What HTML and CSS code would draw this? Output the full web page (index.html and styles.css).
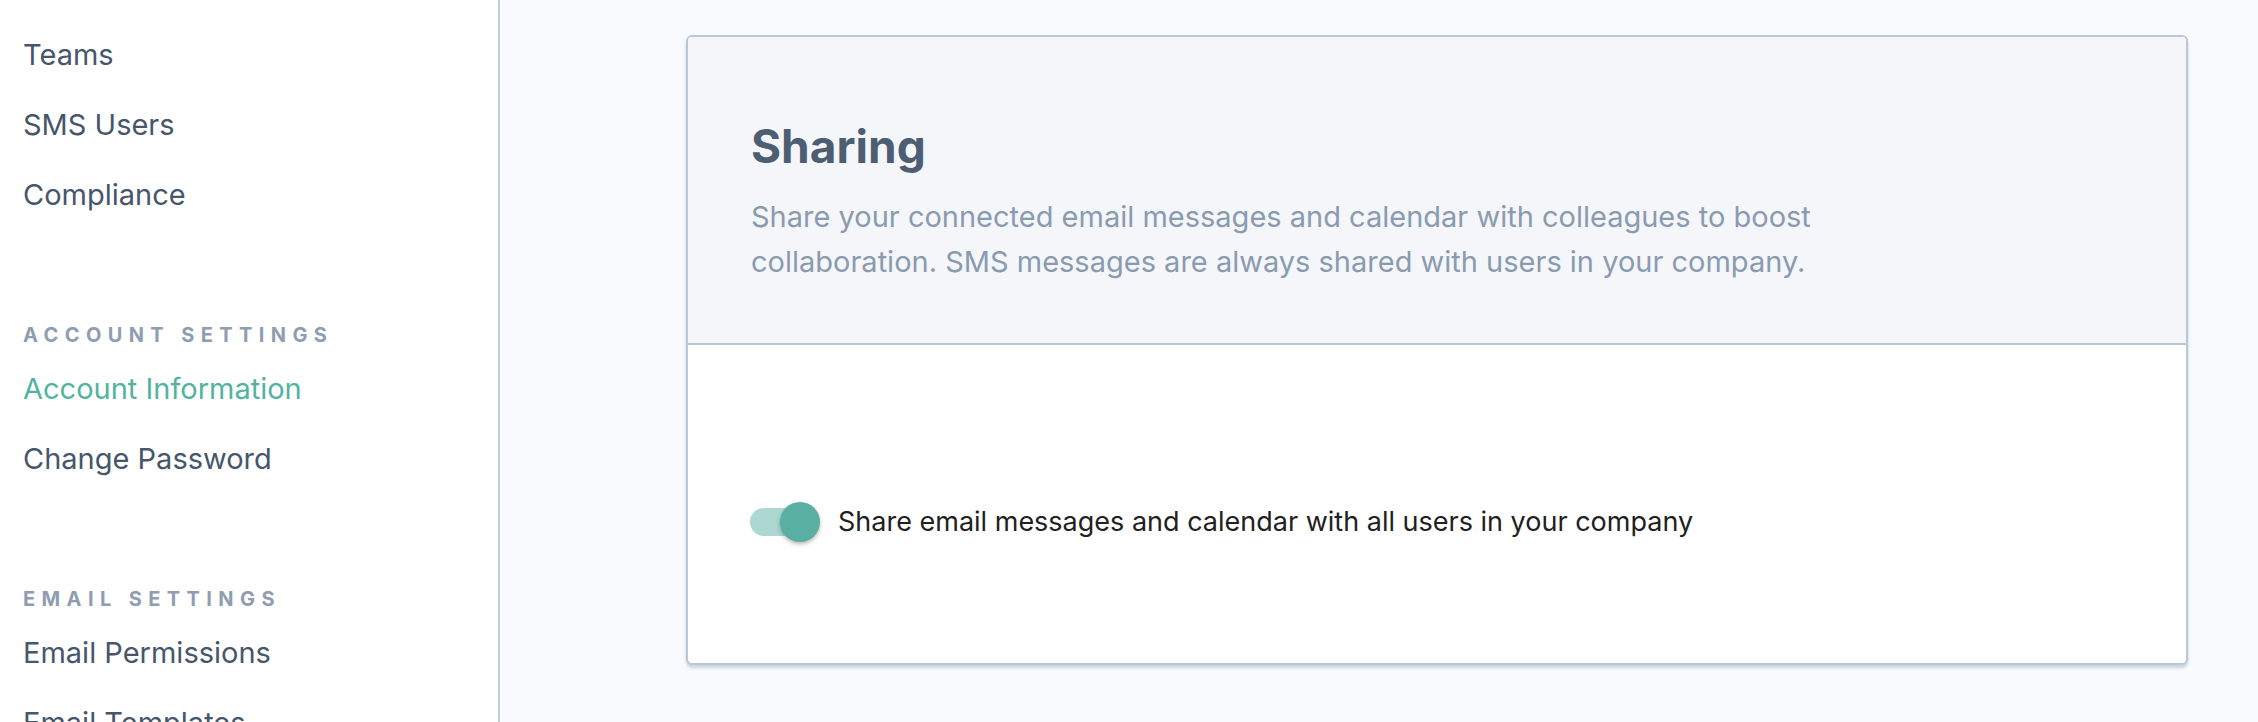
FILE: index.html
```html
<!DOCTYPE html>
<html lang="en">
<head>
<meta charset="UTF-8">
<meta name="viewport" content="width=device-width, initial-scale=1">
<title>Sharing Settings</title>
<link rel="stylesheet" href="styles.css">
</head>
<body>

<!-- Settings Navigation -->
<nav class="sidebar">
  <ul class="nav-list">
    <li><a href="#">Teams</a></li>
    <li><a href="#">SMS Users</a></li>
    <li><a href="#">Compliance</a></li>
  </ul>

  <h4 class="nav-heading">Account Settings</h4>
  <ul class="nav-list">
    <li><a href="#" class="active">Account Information</a></li>
    <li><a href="#">Change Password</a></li>
  </ul>

  <h4 class="nav-heading">Email Settings</h4>
  <ul class="nav-list">
    <li><a href="#">Email Permissions</a></li>
    <li><a href="#">Email Templates</a></li>
  </ul>
</nav>

<!-- Main Content -->
<main class="main">
  <section class="card">
    <div class="card-header">
      <h1>Sharing</h1>
      <p>Share your connected email messages and calendar with colleagues to boost collaboration. SMS messages are always shared with users in your company.</p>
    </div>
    <div class="card-body">
      <label class="switch-row">
        <span class="switch">
          <input type="checkbox" checked>
          <span class="track"></span>
          <span class="thumb"></span>
        </span>
        <span class="switch-label">Share email messages and calendar with all users in your company</span>
      </label>
    </div>
  </section>
</main>

</body>
</html>
```

FILE: styles.css
```css
body {
  margin: 0;
  height: 722px;
  overflow: hidden;
  display: flex;
  font-family: Inter, "Noto Sans", sans-serif;
  background: #f8fafd;
}

/* Sidebar */
.sidebar {
  width: 500px;
  flex-shrink: 0;
  background: #ffffff;
  border-right: 2px solid #c1cddb;
  padding: 20px 0 0 23px;
  box-sizing: border-box;
}

.nav-list {
  list-style: none;
  margin: 0;
  padding: 0;
}

.nav-list a {
  display: block;
  padding: 15px 0;
  font-size: 29px;
  line-height: 40px;
  color: #47566b;
  text-decoration: none;
}

.nav-list a.active {
  color: #52b3a0;
}

.nav-heading {
  margin: 93px 0 7px;
  font-size: 20px;
  line-height: 24px;
  font-weight: 700;
  letter-spacing: 0.32em;
  text-transform: uppercase;
  color: #8f9db0;
}

/* Main */
.main {
  flex: 1;
  padding: 35px 70px 0 186px;
}

.card {
  background: #ffffff;
  border: 2px solid #bac8d6;
  border-radius: 6px;
  box-shadow: 0 3px 3px rgba(120, 140, 165, 0.35);
  overflow: hidden;
}

.card-header {
  background: #f4f6fa;
  border-bottom: 2px solid #bac8d6;
  padding: 80px 60px 59px 63px;
}

.card-header h1 {
  margin: 0 0 19px;
  font-size: 46px;
  line-height: 58px;
  font-weight: 700;
  color: #4d5e73;
}

.card-header p {
  margin: 0;
  max-width: 1080px;
  font-size: 29px;
  line-height: 45px;
  color: #8a9bb0;
}

.card-body {
  padding: 157px 60px 121px 62px;
}

.switch-row {
  display: flex;
  align-items: center;
  gap: 18px;
  cursor: pointer;
}

.switch {
  position: relative;
  width: 70px;
  height: 40px;
  flex-shrink: 0;
}

.switch input {
  display: none;
}

.track {
  position: absolute;
  left: 0;
  top: 6px;
  width: 68px;
  height: 28px;
  border-radius: 14px;
  background: #acd8d1;
}

.thumb {
  position: absolute;
  right: 0;
  top: 0;
  width: 40px;
  height: 40px;
  border-radius: 50%;
  background: #5aafa3;
  box-shadow: 0 2px 4px rgba(0, 0, 0, 0.28);
}

.switch-label {
  font-size: 27px;
  line-height: 40px;
  color: #212121;
}
```
